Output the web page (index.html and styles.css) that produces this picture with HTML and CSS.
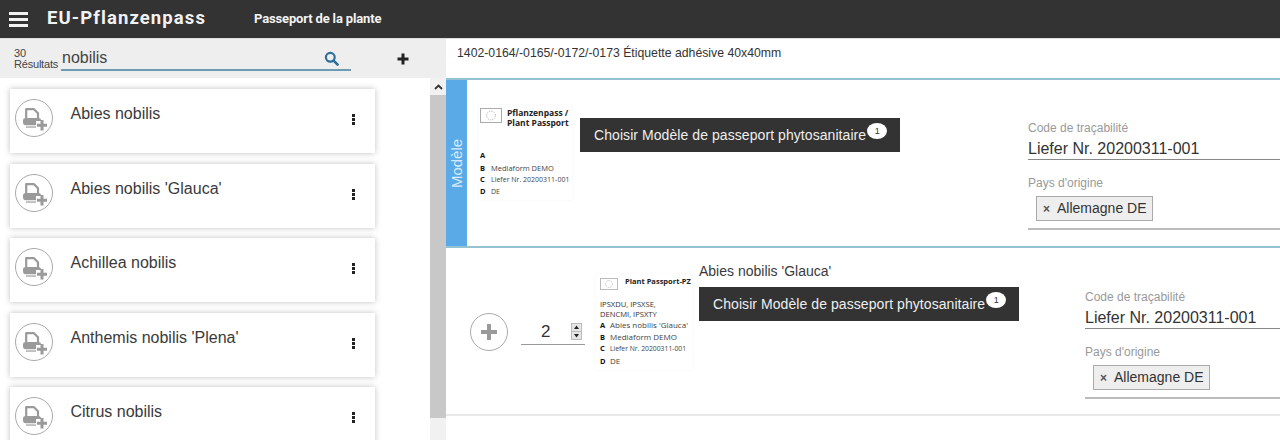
FILE: index.html
```html
<!DOCTYPE html>
<html lang="fr">
<head>
<meta charset="utf-8">
<title>EU-Pflanzenpass</title>
<link rel="stylesheet" href="styles.css">
</head>
<body>
<svg class="defs" width="0" height="0" aria-hidden="true">
  <symbol id="printer-plus" viewBox="0 0 38 38">
    <path d="M11.200 19.500V10.200h7.800l4 4v5.300" fill="none" stroke="#9a9a9a" stroke-width="2.200" stroke-linejoin="round"/>
    <path d="M8 21.500C8 20 9 19 10.500 19h13c1.500 0 2.500 1 2.500 2.200v.8h-5v4.200H10.500C9 26.200 8 25 8 23.500z" fill="#9a9a9a"/>
    <path d="M11 27.300h10v1.500H11z" fill="#b0b0b0"/>
    <path d="M25.500 21h3v3.800h3.500v3h-3.500V31.500h-3v-3.700H22v-3h3.500z" fill="#9a9a9a"/>
  </symbol>
  <symbol id="eu-flag" viewBox="0 0 22 15">
    <rect x=".5" y=".5" width="21" height="14" fill="#fff" stroke="#aaa"/>
    <circle cx="11" cy="7.500" r="4.400" fill="none" stroke="#999" stroke-width=".9" stroke-dasharray="1 1.300"/>
  </symbol>
</svg>

<header class="topbar">
  <div class="burger"><span></span><span></span><span></span></div>
  <div class="brand">EU-Pflanzenpass</div>
  <div class="subtitle">Passeport de la plante</div>
</header>

<main class="layout">
  <aside class="sidebar">
    <div class="searchbar">
      <div class="count">30<br>Résultats</div>
      <div class="searchfield">
        <span class="query">nobilis</span>
        <svg class="search-icon" width="15" height="15" viewBox="0 0 15 15"><circle cx="6.300" cy="6.300" r="4.400" fill="none" stroke="#2b6f9f" stroke-width="2.200"/><path d="M9.600 9.600l4 4" stroke="#2b6f9f" stroke-width="2.600" stroke-linecap="round"/></svg>
      </div>
      <svg class="add-icon" width="12" height="12" viewBox="0 0 12 12"><path d="M4.500.5h3v4h4v3h-4v4h-3v-4h-4v-3h4z" fill="#222"/></svg>
    </div>
    <div class="listwrap">
      <div class="list">
        <article class="card"><div class="round"><svg width="38" height="38"><use href="#printer-plus"/></svg></div><div class="name">Abies nobilis</div><div class="dots"><i></i><i></i><i></i></div></article>
        <article class="card"><div class="round"><svg width="38" height="38"><use href="#printer-plus"/></svg></div><div class="name">Abies nobilis 'Glauca'</div><div class="dots"><i></i><i></i><i></i></div></article>
        <article class="card"><div class="round"><svg width="38" height="38"><use href="#printer-plus"/></svg></div><div class="name">Achillea nobilis</div><div class="dots"><i></i><i></i><i></i></div></article>
        <article class="card"><div class="round"><svg width="38" height="38"><use href="#printer-plus"/></svg></div><div class="name">Anthemis nobilis 'Plena'</div><div class="dots"><i></i><i></i><i></i></div></article>
        <article class="card"><div class="round"><svg width="38" height="38"><use href="#printer-plus"/></svg></div><div class="name">Citrus nobilis</div><div class="dots"><i></i><i></i><i></i></div></article>
      </div>
      <div class="scrollbar">
        <div class="scroll-up"><svg width="9" height="6" viewBox="0 0 9 6"><path d="M1 5l3.500-3.500L8 5" fill="none" stroke="#333" stroke-width="1.800"/></svg></div>
        <div class="scroll-thumb"></div>
      </div>
    </div>
  </aside>

  <section class="content">
    <div class="caption">1402-0164/-0165/-0172/-0173 Étiquette adhésive 40x40mm</div>

    <div class="template">
      <div class="tab"><span>Modèle</span></div>
      <div class="label label-a">
        <div class="label-head">
          <svg class="flag" width="22" height="15"><use href="#eu-flag"/></svg>
          <div class="label-title">Pflanzenpass /<br>Plant Passport</div>
        </div>
        <div class="label-lines">
          <div class="line"><b>A</b></div>
          <div class="line"><b>B</b><span class="wide">Mediaform DEMO</span></div>
          <div class="line"><b>C</b>Liefer Nr. 20200311-001</div>
          <div class="line"><b>D</b>DE</div>
        </div>
      </div>
      <div class="chooser chooser-a">
        <button class="pick">Choisir Modèle de passeport phytosanitaire<span class="badge">1</span></button>
      </div>
      <div class="fields fields-a">
        <div class="field-label">Code de traçabilité</div>
        <div class="field-value">Liefer Nr. 20200311-001</div>
        <div class="field-label second">Pays d'origine</div>
        <div class="chips"><span class="chip"><em>×</em>Allemagne DE</span></div>
      </div>
    </div>

    <div class="entry">
      <div class="round round-plus"><svg width="18" height="18" viewBox="0 0 18 18"><path d="M7 1h4v6h6v4h-6v6H7v-6H1V7h6z" fill="#9a9a9a"/></svg></div>
      <div class="qty">
        <span class="qty-value">2</span>
        <span class="spin"><svg width="11" height="17" viewBox="0 0 11 17"><rect x=".5" y=".5" width="10" height="16" fill="#e6e6e6" stroke="#bbb"/><path d="M.5 8.500h10" stroke="#bbb"/><path d="M5.500 2.600L8 6H3z" fill="#222"/><path d="M5.500 14.400L8 11H3z" fill="#222"/></svg></span>
      </div>
      <div class="label label-b">
        <div class="label-head">
          <svg class="flag" width="18" height="12"><use href="#eu-flag"/></svg>
          <div class="label-title single">Plant Passport-PZ</div>
        </div>
        <div class="label-codes">IPSXDU, IPSXSE,<br>DENCMI, IPSXTY</div>
        <div class="label-lines">
          <div class="line"><b>A</b>Abies nobilis 'Glauca'</div>
          <div class="line"><b>B</b>Mediaform DEMO</div>
          <div class="line"><b>C</b>Liefer Nr. 20200311-001</div>
          <div class="line"><b>D</b>DE</div>
        </div>
      </div>
      <div class="chooser chooser-b">
        <div class="entry-name">Abies nobilis 'Glauca'</div>
        <button class="pick">Choisir Modèle de passeport phytosanitaire<span class="badge">1</span></button>
      </div>
      <div class="fields fields-b">
        <div class="field-label">Code de traçabilité</div>
        <div class="field-value">Liefer Nr. 20200311-001</div>
        <div class="field-label second">Pays d'origine</div>
        <div class="chips"><span class="chip"><em>×</em>Allemagne DE</span></div>
      </div>
    </div>
  </section>
</main>
</body>
</html>
```
FILE: styles.css
```css
* { box-sizing: border-box; }
html, body { margin: 0; height: 440px; overflow: hidden; background: #fff; }
body { display: flex; flex-direction: column; font-family: "Liberation Sans", Arial, sans-serif; color: #333; }
.defs { position: absolute; }

.topbar { flex: 0 0 39px; display: flex; align-items: center; background: #333; border-bottom: 1px solid #ddd; color: #f2f2f2; }
.burger { width: 19px; margin-left: 9px; display: flex; flex-direction: column; gap: 3px; }
.burger span { height: 3px; background: #f2f2f2; }
.brand { margin-left: 19px; width: 207px; font: 700 18.5px/24px Roboto, sans-serif; letter-spacing: 1.1px; padding-bottom: 3px; }
.subtitle { font: 700 13px/20px Roboto, sans-serif; letter-spacing: -.15px; }

.layout { flex: 1; display: flex; min-height: 0; }
.sidebar { flex: 0 0 446px; display: flex; flex-direction: column; background: #fff; }
.searchbar { flex: 0 0 39px; display: flex; align-items: flex-start; background: #eee; }
.count { width: 61px; padding: 9px 0 0 14px; font-size: 11px; line-height: 11px; color: #444; white-space: nowrap; letter-spacing: -.2px; }
.searchfield { width: 290px; height: 32px; display: flex; align-items: center; border-bottom: 2px solid #6b9cb2; }
.query { flex: 1; font-size: 16px; line-height: 24px; padding: 7px 0 0 1px; color: #444; }
.search-icon { margin: 9px 12px 0 0; }
.add-icon { margin: 14px 0 0 46px; }

.listwrap { flex: 1; display: flex; min-height: 0; }
.list { flex: 0 0 430px; padding: 11px 0 0 10px; display: flex; flex-direction: column; gap: 10.5px; overflow: hidden; }
.card { flex: 0 0 64px; width: 365px; display: flex; align-items: flex-start; background: #fff; box-shadow: 0 0 6px rgba(0,0,0,.25); padding: 10px 0 0 5px; }
.round { width: 38px; height: 38px; border-radius: 50%; border: 1px solid #aaa; flex: none; display: flex; align-items: center; justify-content: center; }
.round svg { display: block; margin: -1px; flex: none; }
.name { margin: 4px 0 0 17.5px; font-size: 16px; line-height: 22px; color: #3a3a3a; }
.dots { margin: 15px 20px 0 auto; width: 3px; display: flex; flex-direction: column; gap: 1px; }
.dots i { display: block; height: 3px; background: #222; }

.scrollbar { flex: 0 0 16px; display: flex; flex-direction: column; background: #f1f1f1; }
.scroll-up { height: 17px; display: flex; align-items: center; justify-content: center; }
.scroll-thumb { height: 323px; background: #c8c8c8; }

.content { flex: 1; min-width: 0; overflow: hidden; display: flex; flex-direction: column; }
.caption { flex: 0 0 39px; padding: 6px 0 0 11px; font-size: 12.25px; line-height: 16px; color: #333; white-space: nowrap; }
.template { flex: 0 0 170px; display: flex; align-items: flex-start; border-top: 2px solid #94c2d2; border-bottom: 2px solid #94c2d2; }
.tab { flex: 0 0 21px; width: 21px; min-width: 0; align-self: stretch; background: #5aaae8; color: #d6eafb; display: flex; align-items: center; justify-content: center; overflow: visible; }
.tab span { flex: none; transform: rotate(-90deg); font-size: 15px; }

.label { flex: none; font-family: "Open Sans", sans-serif; color: #333; background: #fff; box-shadow: 0 0 2px rgba(0,0,0,.06); }
.label-a { width: 94px; height: 95px; margin: 25px 0 0 11px; padding: 3px 2px 0 2px; }
.label-b { width: 96px; height: 96px; margin: 26px 0 0 11px; padding: 3px 2px 0 4px; }
.label-head { display: flex; gap: 5px; }
.label-b .label-head { gap: 7px; height: 13px; }
.flag { flex: none; display: block; }
.label-b .flag { margin-top: 1px; }
.label-title { font-size: 8.5px; font-weight: 700; line-height: 10px; white-space: nowrap; color: #222; }
.label-title.single { font-size: 7.5px; line-height: 9px; }
.label-lines { margin-top: 22px; }
.line { height: 12px; font-size: 7px; line-height: 12px; white-space: nowrap; color: #444; }
.line .wide { font-size: 7.5px; }
.line b { display: inline-block; width: 11px; color: #111; font-size: 7.5px; line-height: 10px; }
.label-b .line { font-size: 8px; }
.label-b .line:nth-child(3) { font-size: 6.8px; }
.label-b .line b { width: 10px; }
.label-b .label-lines { margin-top: 0; }
.label-codes { font-size: 7.6px; line-height: 10px; margin-top: 9px; white-space: nowrap; }

.chooser { flex: none; }
.chooser-a { margin: 38px 0 0 8px; }
.chooser-b { margin: 13px 0 0 7px; }
.entry-name { font-size: 14px; line-height: 20px; margin-bottom: 6px; color: #3a3a3a; }
.pick { display: flex; align-items: center; width: 320px; height: 34px; padding: 0 0 0 14px; border: 0; background: #333; color: #eee; font: 14px "Liberation Sans", Arial, sans-serif; letter-spacing: .07px; white-space: nowrap; }
.badge { width: 20px; height: 16px; margin: -8px 0 0 1px; border-radius: 50%; background: #fff; color: #333; font-size: 9px; line-height: 16px; text-align: center; }

.fields { flex: 1; min-width: 0; margin-top: 41px; }
.fields-a { margin-left: 128px; }
.fields-b { margin: 42px 0 0 66px; }
.field-label { font-size: 12px; line-height: 14px; color: #999; }
.field-label.second { margin-top: 16px; }
.field-value { font-size: 16px; line-height: 24px; height: 25px; padding-top: 2px; border-bottom: 1px solid #888; color: #333; }
.chips { padding: 6px 0 7px 8px; border-bottom: 2px solid #bbb; }
.chip { display: block; width: max-content; height: 25px; padding: 0 5px 0 6px; border: 1px solid #aaa; background: #eee; font-size: 14px; line-height: 23px; color: #333; }
.chip em { font-style: normal; font-weight: 700; font-size: 12px; margin-right: 7px; color: #555; }

.entry { flex: 0 0 168px; display: flex; align-items: flex-start; border-bottom: 2px solid #e8e8e8; }
.round-plus { margin: 65px 0 0 24px; }
.round-plus svg { margin: 0; }
.qty { flex: none; width: 64px; height: 32px; margin: 65px 0 0 13px; display: flex; align-items: center; border-bottom: 1px solid #999; }
.qty-value { margin: 6px 0 0 20px; font-size: 17px; color: #333; }
.spin { display: block; margin: 6px 0 0 21px; line-height: 0; }
```
